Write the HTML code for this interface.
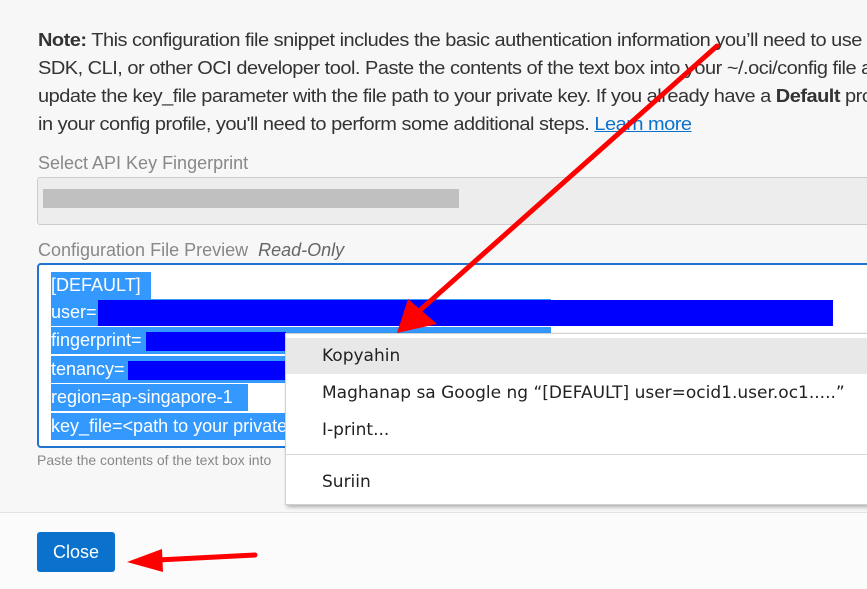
<!DOCTYPE html>
<html><head><meta charset="utf-8"><style>
*{margin:0;padding:0;box-sizing:border-box}
body{width:867px;height:589px;overflow:hidden;background:#f7f7f7;font-family:"Liberation Sans",sans-serif;position:relative}
.note{position:absolute;left:38px;top:26px;width:840px;font-size:18px;line-height:28px;color:#333;white-space:nowrap;letter-spacing:-0.45px;transform:scaleX(1.11);transform-origin:0 0}
.note a{color:#0a72cc;text-decoration:underline}
.lbl{position:absolute;left:38px;font-size:18px;color:#888}
.sel{position:absolute;left:37px;top:177px;width:840px;height:48px;background:#ededed;border:1px solid #ccc;border-radius:3px}
.ta{position:absolute;left:37px;top:263px;width:840px;height:185px;background:#fff;border:2px solid #1f74d0;border-radius:4px}
.ln{position:absolute;left:51px;height:27px;background:#3399ff;color:#fff;font-size:18px;line-height:27px;white-space:nowrap}
.db{position:absolute;background:#0000ff}
.help{position:absolute;left:37px;top:452px;font-size:14px;color:#888}
.foot{position:absolute;left:0;top:512px;width:867px;height:77px;background:#fbfbfb;border-top:1px solid #e3e3e3}
.btn{position:absolute;left:37px;top:532px;width:78px;height:40px;background:#0a72cc;border-radius:3px;color:#fff;font-size:18px;text-align:center;line-height:40px}
.menu{position:absolute;left:285px;top:333px;width:590px;height:172px;background:#fff;border:1px solid #d0d0d0;box-shadow:2px 2px 4px rgba(0,0,0,.3);font-family:"DejaVu Sans","Liberation Sans",sans-serif;font-size:17px;color:#222}
.mi{position:absolute;left:0;width:100%;height:36px;line-height:36px;padding-left:36px;white-space:nowrap}
</style></head><body>
<div class="note"><b>Note:</b> This configuration file snippet includes the basic authentication information you’ll need to use<br>SDK, CLI, or other OCI developer tool. Paste the contents of the text box into your ~/.oci/config file a<br>update the key_file parameter with the file path to your private key. If you already have a <b>Default</b> pro<br>in your config profile, you'll need to perform some additional steps. <a>Learn more</a></div>
<div class="lbl" style="top:153px">Select API Key Fingerprint</div>
<div class="sel"><div style="position:absolute;left:5px;top:11px;width:416px;height:19px;background:#c0c0c0"></div></div>
<div class="lbl" style="top:240px">Configuration File Preview &nbsp;<i style="color:#666">Read-Only</i></div>
<div class="ta"></div>
<div class="ln" style="top:272px;width:100px">[DEFAULT]</div>
<div class="ln" style="top:299px;width:500px">user=</div>
<div class="db" style="left:98px;top:300px;width:735px;height:26px"></div>
<div class="ln" style="top:327px;width:500px">fingerprint=</div>
<div class="db" style="left:146px;top:332px;width:140px;height:19px"></div>
<div class="ln" style="top:356px;width:300px">tenancy=</div>
<div class="db" style="left:128px;top:361px;width:158px;height:19px"></div>
<div class="ln" style="top:384px;width:197px">region=ap-singapore-1</div>
<div class="ln" style="top:413px;width:240px">key_file=&lt;path to your private key&gt;</div>
<div class="help">Paste the contents of the text box into</div>
<div class="menu">
<div class="mi" style="top:4px;background:#e8e8e8">Kopyahin</div>
<div class="mi" style="top:41px">Maghanap sa Google ng “[DEFAULT] user=ocid1.user.oc1.....”</div>
<div class="mi" style="top:78px">I-print...</div>
<div style="position:absolute;left:0;top:120px;width:100%;height:1px;background:#d8d8d8"></div>
<div class="mi" style="top:130px">Suriin</div>
</div>
<div class="foot"></div>
<div class="btn">Close</div>
<svg style="position:absolute;left:0;top:0" width="867" height="589">
<line x1="717" y1="46" x2="418" y2="312" stroke="#f00" stroke-width="5" stroke-linecap="round"/>
<polygon points="397,333 408,299 437,324" fill="#f00"/>
<line x1="255" y1="555" x2="158" y2="560" stroke="#f00" stroke-width="5" stroke-linecap="round"/>
<polygon points="127,562 162,549 163,572" fill="#f00"/>
</svg>
</body></html>
